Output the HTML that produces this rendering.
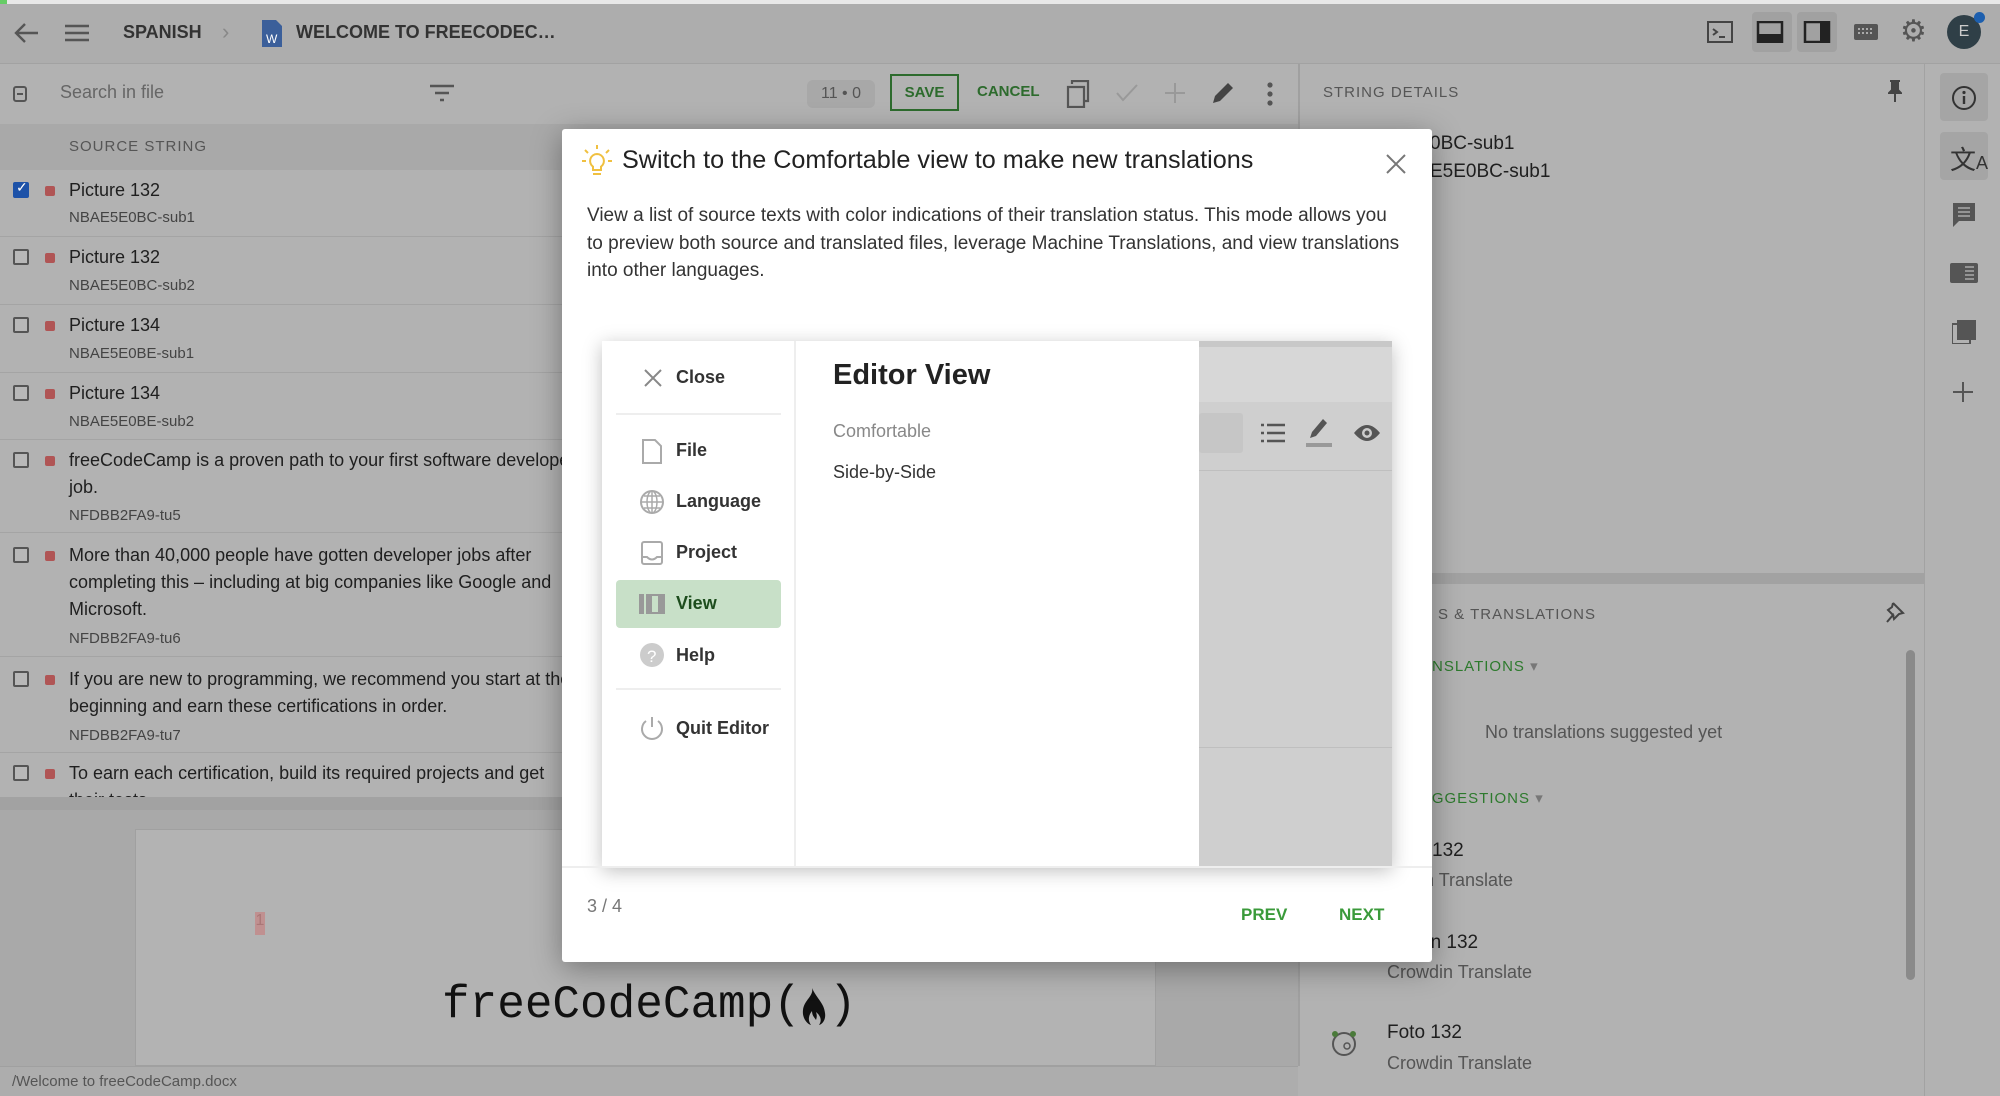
<!DOCTYPE html>
<html><head><meta charset="utf-8"><style>
*{margin:0;padding:0;box-sizing:border-box}
body{width:2000px;height:1096px;position:relative;overflow:hidden;background:#b2b2b2;font-family:"Liberation Sans",sans-serif;color:#1f1f1f}
.a{position:absolute;white-space:nowrap}
.g{color:#555}
.row{position:absolute;left:0;width:1298px;border-bottom:1px solid #a4a4a4}
.cb{position:absolute;left:13px;width:16px;height:16px;border:2px solid #555;border-radius:2px;background:#b8b8b8}
.dot{position:absolute;left:45px;width:10px;height:10px;background:#b05555;border-radius:2px}
.t{position:absolute;left:69px;font-size:18px;color:#1f1f1f;line-height:27px}
.id{position:absolute;left:69px;font-size:15px;color:#444}
.mi{position:absolute;left:676px;font-size:18px;font-weight:bold;color:#333}
</style></head><body>
<div class="a" style="left:0;top:0;width:2000px;height:4px;background:#e8e8e8"></div>
<div class="a" style="left:0;top:0;width:7px;height:4px;background:#6c6"></div>
<!-- top bar -->
<div class="a" style="left:0;top:4px;width:2000px;height:60px;background:#adadad;border-bottom:1px solid #a2a2a2"></div>
<svg class="a" style="left:14px;top:22px" width="26" height="22" viewBox="0 0 26 22"><path d="M24 11H3M11 2L2 11l9 9" stroke="#555" stroke-width="2.4" fill="none"/></svg>
<svg class="a" style="left:65px;top:24px" width="24" height="18"><path d="M0 2h24M0 9h24M0 16h24" stroke="#555" stroke-width="2.4"/></svg>
<div class="a" style="left:123px;top:22px;font-size:18px;font-weight:bold;color:#333">SPANISH</div>
<div class="a" style="left:222px;top:19px;font-size:22px;color:#888">›</div>
<svg class="a" style="left:262px;top:20px" width="20" height="27"><path d="M0 0h14l6 6v21H0z" fill="#3b5f9a"/><text x="4" y="23" font-size="12" fill="#fff" font-family="Liberation Sans">W</text></svg>
<div class="a" style="left:296px;top:22px;font-size:18px;font-weight:bold;color:#333">WELCOME TO FREECODEC…</div>
<div class="a" style="left:1752px;top:12px;width:40px;height:40px;background:#a1a1a1;border-radius:4px"></div>
<div class="a" style="left:1797px;top:12px;width:40px;height:40px;background:#a1a1a1;border-radius:4px"></div>
<svg class="a" style="left:1707px;top:21px" width="26" height="22"><rect x="1" y="1" width="24" height="20" fill="none" stroke="#444" stroke-width="2"/><path d="M6 8l4 3-4 3M12 16h6" stroke="#444" stroke-width="2" fill="none"/></svg>
<svg class="a" style="left:1756px;top:21px" width="28" height="22"><rect x="2" y="1" width="24" height="20" fill="none" stroke="#222" stroke-width="2.5"/><rect x="2" y="13" width="24" height="8" fill="#222"/></svg>
<svg class="a" style="left:1803px;top:21px" width="28" height="22"><rect x="2" y="1" width="24" height="20" fill="none" stroke="#222" stroke-width="2.5"/><rect x="17" y="1" width="9" height="20" fill="#222"/></svg>
<svg class="a" style="left:1854px;top:24px" width="24" height="16"><rect width="24" height="16" rx="2" fill="#555"/><path d="M4 5h16M4 9h16" stroke="#aaa" stroke-width="2" stroke-dasharray="2 2"/></svg>
<div class="a" style="left:1900px;top:14px;font-size:30px;color:#555">⚙</div>
<div class="a" style="left:1947px;top:15px;width:34px;height:34px;border-radius:50%;background:#2f3f47;color:#ccc;font-size:16px;text-align:center;line-height:34px">E</div>
<div class="a" style="left:1974px;top:12px;width:11px;height:11px;border-radius:50%;background:#1d5fae"></div>
<!-- toolbar -->
<div class="a" style="left:13px;top:86px;width:14px;height:16px;border:2px solid #555;border-radius:3px"></div>
<div class="a" style="left:17px;top:93px;width:6px;height:2px;background:#555"></div>
<div class="a g" style="left:60px;top:82px;font-size:18px;color:#666">Search in file</div>
<svg class="a" style="left:430px;top:84px" width="24" height="18"><path d="M0 2h24M5 9h14M10 16h4" stroke="#555" stroke-width="2.4"/></svg>
<div class="a" style="left:807px;top:80px;width:68px;height:28px;background:#a8a8a8;border-radius:6px;font-size:16px;color:#555;text-align:center;line-height:28px">11 • 0</div>
<div class="a" style="left:890px;top:74px;width:69px;height:37px;border:2px solid #2d6b2d;font-size:15px;font-weight:bold;color:#2d6b2d;text-align:center;line-height:33px">SAVE</div>
<div class="a" style="left:977px;top:83px;font-size:15px;font-weight:bold;color:#2d6b2d">CANCEL</div>
<svg class="a" style="left:1066px;top:80px" width="24" height="28"><path d="M6 4V1h16v20h-4M2 7h16v20H2z" fill="none" stroke="#555" stroke-width="2.2"/></svg>
<svg class="a" style="left:1116px;top:84px" width="22" height="18"><path d="M1 9l6 7L21 1" fill="none" stroke="#999" stroke-width="2"/></svg>
<svg class="a" style="left:1165px;top:83px" width="20" height="20"><path d="M10 0v20M0 10h20" stroke="#999" stroke-width="2"/></svg>
<svg class="a" style="left:1211px;top:81px" width="24" height="24"><path d="M2 22l2-7L17 2l5 5L9 20z" fill="#444"/></svg>
<svg class="a" style="left:1266px;top:82px" width="8" height="24"><circle cx="4" cy="3" r="2.6" fill="#555"/><circle cx="4" cy="12" r="2.6" fill="#555"/><circle cx="4" cy="21" r="2.6" fill="#555"/></svg>
<div class="a" style="left:1298px;top:64px;width:2px;height:1002px;background:#a0a0a0"></div>
<!-- header -->
<div class="a" style="left:0;top:124px;width:1298px;height:46px;background:#a9a9a9"></div>
<div class="a" style="left:69px;top:138px;font-size:15px;letter-spacing:1px;color:#555">SOURCE STRING</div>
<!-- rows -->
<div class="row" style="top:170px;height:67px"><div class="cb" style="top:12px;background:#1d52a8;border-color:#1d52a8"></div><div class="a" style="left:16px;top:9px;color:#fff;font-size:14px">✓</div><div class="dot" style="top:16px"></div><div class="t" style="top:7px">Picture 132</div><div class="id" style="top:39px">NBAE5E0BC-sub1</div></div>
<div class="row" style="top:237px;height:68px"><div class="cb" style="top:12px"></div><div class="dot" style="top:16px"></div><div class="t" style="top:7px">Picture 132</div><div class="id" style="top:40px">NBAE5E0BC-sub2</div></div>
<div class="row" style="top:305px;height:68px"><div class="cb" style="top:12px"></div><div class="dot" style="top:16px"></div><div class="t" style="top:7px">Picture 134</div><div class="id" style="top:40px">NBAE5E0BE-sub1</div></div>
<div class="row" style="top:373px;height:67px"><div class="cb" style="top:12px"></div><div class="dot" style="top:16px"></div><div class="t" style="top:7px">Picture 134</div><div class="id" style="top:40px">NBAE5E0BE-sub2</div></div>
<div class="row" style="top:440px;height:93px"><div class="cb" style="top:12px"></div><div class="dot" style="top:16px"></div><div class="t" style="top:7px">freeCodeCamp is a proven path to your first software developer<br>job.</div><div class="id" style="top:67px">NFDBB2FA9-tu5</div></div>
<div class="row" style="top:533px;height:124px"><div class="cb" style="top:14px"></div><div class="dot" style="top:18px"></div><div class="t" style="top:9px">More than 40,000 people have gotten developer jobs after<br>completing this – including at big companies like Google and<br>Microsoft.</div><div class="id" style="top:97px">NFDBB2FA9-tu6</div></div>
<div class="row" style="top:657px;height:96px"><div class="cb" style="top:14px"></div><div class="dot" style="top:18px"></div><div class="t" style="top:9px">If you are new to programming, we recommend you start at the<br>beginning and earn these certifications in order.</div><div class="id" style="top:70px">NFDBB2FA9-tu7</div></div>
<div class="row" style="top:753px;height:44px;overflow:hidden;border:none"><div class="cb" style="top:12px"></div><div class="dot" style="top:16px"></div><div class="t" style="top:7px">To earn each certification, build its required projects and get<br>their tests</div></div>
<div class="a" style="left:0;top:797px;width:1298px;height:13px;background:#a2a2a2"></div>
<!-- preview -->
<div class="a" style="left:0;top:810px;width:1298px;height:256px;background:#a9a9a9"></div>
<div class="a" style="left:135px;top:829px;width:1021px;height:237px;background:#b3b3b3;border:1px solid #a0a0a0"></div>
<div class="a" style="left:255px;top:912px;width:10px;height:23px;background:#c09090;color:#a77;font-size:16px;text-align:center">1</div>
<div class="a" style="left:442px;top:979px;font-family:'Liberation Mono',monospace;font-size:46px;color:#111">freeCodeCamp(<span style="display:inline-block;width:28px"></span>)</div>
<svg class="a" style="left:800px;top:988px" width="26" height="38" viewBox="0 0 26 38"><path d="M12 0C14 8 4 12 3 22c-1 8 4 14 8 15-3-4-3-9 1-14 0 5 3 7 4 9 1-3 1-5 0-8 5 4 6 9 3 13 4-1 7-6 6-12C24 15 17 11 12 0z" fill="#111"/></svg>
<div class="a" style="left:0;top:1066px;width:1298px;height:30px;background:#adadad;border-top:1px solid #a0a0a0"></div>
<div class="a" style="left:12px;top:1073px;font-size:15px;color:#555">/Welcome to freeCodeCamp.docx</div>
<!-- right panel -->
<div class="a" style="left:1323px;top:84px;font-size:15px;letter-spacing:1px;color:#555">STRING DETAILS</div>
<svg class="a" style="left:1888px;top:80px" width="14" height="22"><path d="M2 1h10M4 1v9l-3 3h12l-3-3V1M7 13v9" stroke="#444" stroke-width="2" fill="#444"/></svg>
<div class="a" style="left:1430px;top:133px;font-size:19px">0BC-sub1</div>
<div class="a" style="left:1430px;top:161px;font-size:19px">E5E0BC-sub1</div>
<div class="a" style="left:1300px;top:573px;width:624px;height:11px;background:#a2a2a2"></div>
<div class="a" style="left:1438px;top:606px;font-size:15px;letter-spacing:1px;color:#555">S &amp; TRANSLATIONS</div>
<svg class="a" style="left:1885px;top:601px" width="20" height="22"><path d="M8 2l10 10-4 1-5 5-1-4-6 7M8 2l-1 4-4 3 6 6" fill="none" stroke="#444" stroke-width="2"/></svg>
<div class="a" style="left:1432px;top:657px;font-size:15px;letter-spacing:1px;color:#2d7a2d">NSLATIONS <span style="color:#777">▾</span></div>
<div class="a" style="left:1485px;top:722px;font-size:18px;color:#555">No translations suggested yet</div>
<div class="a" style="left:1420px;top:789px;font-size:15px;letter-spacing:1px;color:#2d7a2d">UGGESTIONS <span style="color:#777">▾</span></div>
<div class="a" style="left:1432px;top:840px;font-size:19px">132</div>
<div class="a" style="left:1410px;top:870px;font-size:18px;color:#555">din Translate</div>
<div class="a" style="left:1420px;top:932px;font-size:19px">en 132</div>
<div class="a" style="left:1387px;top:962px;font-size:18px;color:#555">Crowdin Translate</div>
<svg class="a" style="left:1330px;top:1030px" width="28" height="26"><circle cx="14" cy="14" r="11" fill="none" stroke="#555" stroke-width="2"/><circle cx="5" cy="4" r="3" fill="#4a7a3a"/><circle cx="23" cy="4" r="3" fill="#4a7a3a"/><circle cx="17" cy="16" r="3" fill="none" stroke="#555" stroke-width="1.5"/></svg>
<div class="a" style="left:1387px;top:1022px;font-size:19px">Foto 132</div>
<div class="a" style="left:1387px;top:1053px;font-size:18px;color:#555">Crowdin Translate</div>
<div class="a" style="left:1906px;top:650px;width:9px;height:330px;background:#8a8a8a;border-radius:5px"></div>
<!-- right sidebar -->
<div class="a" style="left:1924px;top:64px;width:76px;height:1032px;background:#b2b2b2;border-left:1px solid #a2a2a2"></div>
<div class="a" style="left:1940px;top:73px;width:48px;height:48px;background:#a5a5a5;border-radius:4px"></div>
<div class="a" style="left:1940px;top:132px;width:48px;height:48px;background:#a5a5a5;border-radius:4px"></div>
<svg class="a" style="left:1951px;top:85px" width="26" height="26"><circle cx="13" cy="13" r="11" fill="none" stroke="#333" stroke-width="2"/><path d="M13 11v8" stroke="#333" stroke-width="2.4"/><circle cx="13" cy="7.5" r="1.6" fill="#333"/></svg>
<div class="a" style="left:1950px;top:140px;font-size:26px;color:#333;font-family:'Noto Sans CJK SC',sans-serif">文<span style="font-size:18px;font-family:'Liberation Sans'">A</span></div>
<svg class="a" style="left:1953px;top:203px" width="22" height="24"><path d="M0 0h22v18H6l-6 6z" fill="#555"/><path d="M5 5h12M5 9h12M5 13h12" stroke="#aaa" stroke-width="1.6"/></svg>
<svg class="a" style="left:1950px;top:263px" width="28" height="20"><rect width="28" height="20" rx="2" fill="#555"/><path d="M15 4h9M15 8h9M15 12h9M15 16h9" stroke="#aaa" stroke-width="1.5"/></svg>
<svg class="a" style="left:1952px;top:320px" width="24" height="24"><rect x="0" y="4" width="18" height="20" fill="none" stroke="#555" stroke-width="2"/><rect x="5" y="0" width="19" height="20" fill="#555"/></svg>
<svg class="a" style="left:1953px;top:382px" width="20" height="20"><path d="M10 0v20M0 10h20" stroke="#555" stroke-width="2"/></svg>
<!-- dialog -->
<div class="a" style="left:562px;top:129px;width:870px;height:833px;background:#fff;border-radius:3px;box-shadow:0 6px 30px rgba(0,0,0,.35)"></div>
<svg class="a" style="left:582px;top:145px" width="30" height="34"><path d="M15 0v4M3 5l3 3M27 5l-3 3M0 16h4M26 16h4" stroke="#f0c040" stroke-width="2"/><path d="M15 9a7 7 0 0 0-4 12.7V25h8v-3.3A7 7 0 0 0 15 9z" fill="none" stroke="#f0c040" stroke-width="2"/><path d="M11 29h8" stroke="#f0c040" stroke-width="2"/></svg>
<div class="a" style="left:622px;top:146px;font-size:25.2px;color:#222">Switch to the Comfortable view to make new translations</div>
<svg class="a" style="left:1386px;top:154px" width="20" height="20"><path d="M1 1l18 18M19 1L1 19" stroke="#777" stroke-width="2"/></svg>
<div class="a" style="left:587px;top:202px;font-size:19px;line-height:27.5px;color:#333;white-space:normal;width:820px">View a list of source texts with color indications of their translation status. This mode allows you to preview both source and translated files, leverage Machine Translations, and view translations into other languages.</div>
<!-- inner preview -->
<div class="a" style="left:602px;top:341px;width:790px;height:526px;box-shadow:0 4px 18px rgba(0,0,0,.25);background:#cfcfcf"></div>
<div class="a" style="left:1199px;top:341px;width:193px;height:61px;background:#d7d7d7;border-top:6px solid #c8c8c8"></div>
<div class="a" style="left:1199px;top:413px;width:44px;height:40px;background:#c6c6c6;border-radius:3px"></div>
<div class="a" style="left:1199px;top:470px;width:193px;height:1px;background:#bfbfbf"></div>
<div class="a" style="left:1199px;top:747px;width:193px;height:1px;background:#bfbfbf"></div>
<svg class="a" style="left:1260px;top:422px" width="26" height="22"><path d="M7 3h18M7 11h18M7 19h18M1 3h3M1 11h3M1 19h3" stroke="#555" stroke-width="2.4"/></svg>
<svg class="a" style="left:1304px;top:416px" width="28" height="32"><path d="M6 22l2-6L19 3l4 4-11 13z" fill="#555"/><rect x="2" y="27" width="26" height="4" fill="#999"/></svg>
<svg class="a" style="left:1353px;top:422px" width="28" height="22"><path d="M1 11Q14-5 27 11Q14 27 1 11z" fill="#555"/><circle cx="14" cy="11" r="5" fill="#ccc"/><circle cx="14" cy="11" r="2.5" fill="#555"/></svg>
<div class="a" style="left:602px;top:341px;width:194px;height:526px;background:#fff;border-right:2px solid #eee"></div>
<div class="a" style="left:796px;top:341px;width:403px;height:526px;background:#fff"></div>
<svg class="a" style="left:644px;top:369px" width="18" height="18"><path d="M1 1l16 16M17 1L1 17" stroke="#888" stroke-width="2"/></svg>
<div class="mi" style="top:367px">Close</div>
<div class="a" style="left:616px;top:413px;width:165px;height:2px;background:#eee"></div>
<svg class="a" style="left:642px;top:439px" width="20" height="25"><path d="M1 1h12l6 6v17H1z" fill="none" stroke="#aaa" stroke-width="2"/></svg>
<div class="mi" style="top:440px">File</div>
<svg class="a" style="left:640px;top:490px" width="24" height="24"><circle cx="12" cy="12" r="11" fill="none" stroke="#aaa" stroke-width="2"/><path d="M1 12h22M12 1v22M4 6h16M4 18h16" stroke="#aaa" stroke-width="1.5"/><ellipse cx="12" cy="12" rx="5" ry="11" fill="none" stroke="#aaa" stroke-width="1.5"/></svg>
<div class="mi" style="top:491px">Language</div>
<svg class="a" style="left:641px;top:541px" width="22" height="24"><rect x="1" y="1" width="20" height="22" rx="2" fill="none" stroke="#aaa" stroke-width="2"/><path d="M1 16h5q5 5 10 0h5" fill="none" stroke="#aaa" stroke-width="2"/></svg>
<div class="mi" style="top:542px">Project</div>
<div class="a" style="left:616px;top:580px;width:165px;height:48px;background:#c8e0c8;border-radius:4px"></div>
<svg class="a" style="left:639px;top:594px" width="26" height="20"><rect x="0" y="0" width="5" height="20" fill="#999"/><rect x="7" y="0" width="4" height="20" fill="#999"/><rect x="12" y="1" width="8" height="18" fill="none" stroke="#999" stroke-width="2"/><rect x="21" y="0" width="5" height="20" fill="#999"/></svg>
<div class="mi" style="top:593px;color:#1d4d1d">View</div>
<svg class="a" style="left:640px;top:643px" width="24" height="24"><circle cx="12" cy="12" r="12" fill="#ccc"/><text x="7" y="19" font-size="17" fill="#fff" font-family="Liberation Sans">?</text></svg>
<div class="mi" style="top:645px">Help</div>
<div class="a" style="left:616px;top:688px;width:165px;height:2px;background:#eee"></div>
<svg class="a" style="left:640px;top:716px" width="24" height="26"><path d="M12 1v10" stroke="#aaa" stroke-width="2"/><path d="M6 5a10 10 0 1 0 12 0" fill="none" stroke="#aaa" stroke-width="2"/></svg>
<div class="mi" style="top:718px">Quit Editor</div>
<div class="a" style="left:833px;top:359px;font-size:29px;font-weight:bold;color:#222">Editor View</div>
<div class="a" style="left:833px;top:421px;font-size:18px;color:#888">Comfortable</div>
<div class="a" style="left:833px;top:462px;font-size:18px;color:#333">Side-by-Side</div>
<div class="a" style="left:562px;top:866px;width:870px;height:2px;background:#eee"></div>
<div class="a" style="left:587px;top:896px;font-size:18px;color:#777">3 / 4</div>
<div class="a" style="left:1241px;top:905px;font-size:17px;font-weight:bold;color:#3a9a3a">PREV</div>
<div class="a" style="left:1339px;top:905px;font-size:17px;font-weight:bold;color:#3a9a3a">NEXT</div>
</body></html>
